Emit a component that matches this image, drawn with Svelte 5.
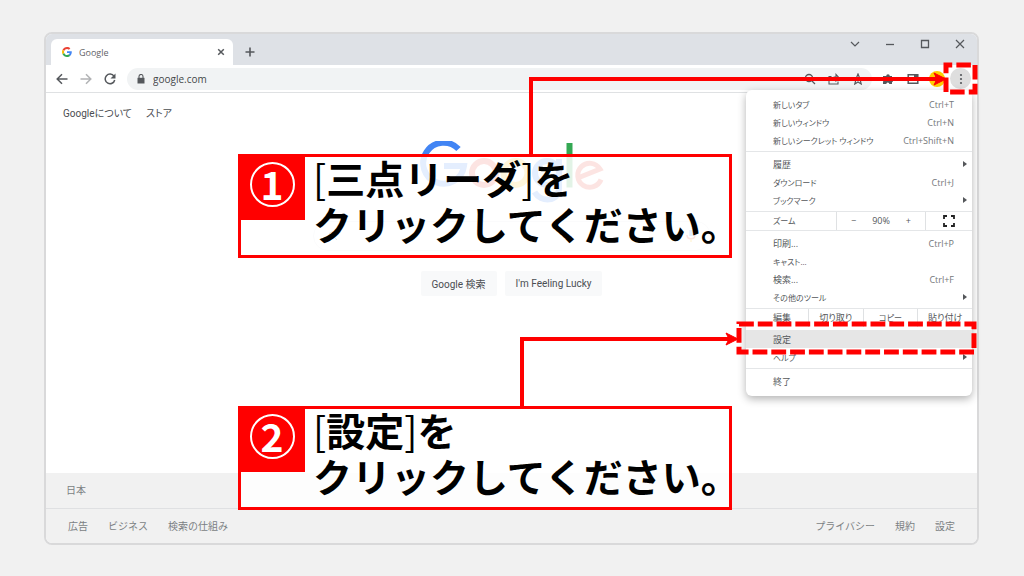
<script lang="ts">
	type MenuItem = { label: string; keys?: string; sub?: boolean; active?: boolean };

	const tabItems: MenuItem[] = [
		{ label: '新しいタブ', keys: 'Ctrl+T' },
		{ label: '新しいウィンドウ', keys: 'Ctrl+N' },
		{ label: '新しいシークレット ウィンドウ', keys: 'Ctrl+Shift+N' },
	];
	const historyItems: MenuItem[] = [
		{ label: '履歴', sub: true },
		{ label: 'ダウンロード', keys: 'Ctrl+J' },
		{ label: 'ブックマーク', sub: true },
	];
	const toolItems: MenuItem[] = [
		{ label: '印刷...', keys: 'Ctrl+P' },
		{ label: 'キャスト...' },
		{ label: '検索...', keys: 'Ctrl+F' },
		{ label: 'その他のツール', sub: true },
	];
	const settingItems: MenuItem[] = [
		{ label: '設定', active: true },
		{ label: 'ヘルプ', sub: true },
	];
	const exitItems: MenuItem[] = [{ label: '終了' }];

	const steps = [
		{ no: 1, target: '三点リーダ' },
		{ no: 2, target: '設定' },
	];

	// kana labels are set one size smaller than kanji ones
	const hasKana = (text: string): boolean => /[ぁ-んァ-ヶ]/.test(text);

	let query = '';
	let address = 'google.com';
</script>

{#snippet group(items: MenuItem[])}
	<div class="group">
		{#each items as item}
			<button class="item" class:active={item.active}>
				<span class="label" class:kana={hasKana(item.label)}>{item.label}</span>
				{#if item.keys}<span class="keys">{item.keys}</span>{/if}
				{#if item.sub}<span class="arrow"></span>{/if}
			</button>
		{/each}
	</div>
{/snippet}

<div class="page">
	<div class="window">
		<header class="titlebar">
			<div class="tab">
				<svg class="favicon" viewBox="0 0 48 48" width="10" height="10">
					<path fill="#ea4335" d="M24 9.5c3.5 0 6.700 1.200 9.200 3.600l6.900-6.900C35.900 2.400 30.500 0 24 0 14.600 0 6.500 5.400 2.600 13.200l8 6.200C12.400 13.700 17.700 9.500 24 9.500z" />
					<path fill="#4285f4" d="M47 24.500c0-1.600-.2-3.100-.4-4.500H24v9h12.900c-.6 3-2.200 5.500-4.800 7.200l7.700 6C44.400 38 47 31.800 47 24.500z" />
					<path fill="#fbbc05" d="M10.500 28.600c-.5-1.500-.8-3-.8-4.600s.3-3.100.8-4.600l-8-6.200C.9 16.500 0 20.100 0 24s.9 7.500 2.600 10.800z" />
					<path fill="#34a853" d="M24 48c6.500 0 11.900-2.100 15.900-5.800l-7.700-6c-2.200 1.500-4.900 2.300-8.200 2.300-6.300 0-11.600-4.200-13.500-9.900l-8 6.200C6.500 42.600 14.600 48 24 48z" />
				</svg>
				<span class="tab-title">Google</span>
				<button class="icon" aria-label="タブを閉じる">
					<svg width="8" height="8" viewBox="0 0 8 8"><path d="M1.200 1.200l5.600 5.600M6.800 1.200L1.200 6.800" stroke-width="1.500" /></svg>
				</button>
			</div>
			<button class="icon new-tab" aria-label="新しいタブ">
				<svg width="10" height="10" viewBox="0 0 10 10"><path d="M5 .5v9M.5 5h9" stroke-width="1.600" /></svg>
			</button>
			<div class="controls">
				<button class="icon" aria-label="タブを検索"><svg width="10" height="10" viewBox="0 0 10 10"><path d="M1 3l4 4 4-4" stroke-width="1.200" /></svg></button>
				<button class="icon" aria-label="最小化"><svg width="10" height="10" viewBox="0 0 10 10"><path d="M1 5.500h8" stroke-width="1.300" /></svg></button>
				<button class="icon" aria-label="最大化"><svg width="10" height="10" viewBox="0 0 10 10"><path d="M1.500 1.500h7v7h-7z" stroke-width="1.300" /></svg></button>
				<button class="icon" aria-label="閉じる"><svg width="10" height="10" viewBox="0 0 10 10"><path d="M1 1l8 8M9 1L1 9" stroke-width="1.200" /></svg></button>
			</div>
		</header>

		<div class="toolbar">
			<nav class="history">
				<button class="icon" aria-label="戻る"><svg width="12" height="12" viewBox="0 0 12 12"><path d="M11.500 6H1.500M6 1.200L1.200 6 6 10.800" stroke-width="1.500" /></svg></button>
				<button class="icon faded" aria-label="進む"><svg width="12" height="12" viewBox="0 0 12 12"><path d="M.5 6h10M6 1.200L10.800 6 6 10.800" stroke-width="1.500" /></svg></button>
				<button class="icon" aria-label="再読み込み"><svg width="12" height="12" viewBox="0 0 12 12"><path d="M10 3.200A4.800 4.800 0 1 0 10.700 7" stroke-width="1.500" /><path class="solid" d="M11.500.5v5h-5z" /></svg></button>
			</nav>
			<div class="omnibox">
				<svg width="8" height="10" viewBox="0 0 8 10"><path class="solid" d="M.5 3.800h7v5.700h-7z" /><path d="M2 4V2.500a2 2 0 0 1 4 0V4" stroke-width="1.100" /></svg>
				<input class="address" aria-label="アドレス" bind:value={address} />
				<svg width="12" height="12" viewBox="0 0 12 12"><circle cx="5" cy="5" r="3.500" stroke-width="1.300" /><path d="M7.500 7.500l3.500 3.500" stroke-width="1.300" /></svg>
				<svg width="12" height="12" viewBox="0 0 12 12"><path d="M3.500 3.500H1v7.500h9V8.500M3.500 8c.3-3 2-4.200 4.500-4.200V1.500L11.300 5 8 8V5.800" stroke-width="1.100" /></svg>
				<svg width="12" height="12" viewBox="0 0 12 12"><path d="M6 1l1.400 3.500 3.800.3-2.900 2.500.9 3.700L6 9l-3.200 2 .9-3.700L.8 4.800l3.800-.3z" stroke-width="1.200" /></svg>
			</div>
			<div class="extensions">
				<button class="icon" aria-label="拡張機能"><svg width="12" height="12" viewBox="0 0 12 12"><path class="solid" d="M1 3h3.200a1.800 1.800 0 0 1 3.600 0H10v3a1.700 1.700 0 0 1 0 3.200V11H7.300a1.500 1.500 0 0 0-3 0H1V8.300a1.500 1.500 0 0 0 0-3z" /></svg></button>
				<button class="icon" aria-label="サイドパネル"><svg width="12" height="12" viewBox="0 0 12 12"><path d="M1.200 1.700h9.600v8.600H1.200z" stroke-width="1.500" /><path class="solid" d="M7 2h4v4.500H7z" /></svg></button>
				<button class="icon avatar" aria-label="プロフィール"><svg width="8" height="10" viewBox="0 0 8 10"><path class="solid" d="M2 0l5 4.500L2.500 10z" /></svg></button>
				<button class="icon more" aria-label="メニュー"><svg width="4" height="12" viewBox="0 0 4 12"><circle class="solid" cx="2" cy="2" r="1.100" /><circle class="solid" cx="2" cy="6" r="1.100" /><circle class="solid" cx="2" cy="10" r="1.100" /></svg></button>
			</div>
		</div>

		<main>
			<nav class="top-links">
				<a href="#about">Googleについて</a>
				<a href="#store">ストア</a>
			</nav>
			<svg class="logo" width="184" height="62" viewBox="0 0 184 62" aria-label="Google">
				<path d="M38.500 8A20.500 20.500 0 1 0 44 25H24" stroke="#4285f4" />
				<circle cx="64" cy="32" r="12" stroke="#ea4335" />
				<circle cx="95.500" cy="32" r="12" stroke="#fbbc05" />
				<path d="M139 18v29c0 14-18 15-24.500 4M139 32a12 12 0 1 0-24 0 12 12 0 0 0 24 0" stroke="#4285f4" />
				<path d="M149.500 2v44.500" stroke="#34a853" />
				<path d="M159 36.500L180 28a12 12 0 1 0 1 10.500" stroke="#ea4335" stroke-width="5" />
			</svg>
			<div class="search">
				<svg width="10" height="10" viewBox="0 0 10 10"><circle cx="4" cy="4" r="3" /><path d="M6.500 6.500L9 9" /></svg>
				<input aria-label="検索" bind:value={query} />
				<svg width="10" height="14" viewBox="0 0 10 14"><path d="M5 1v6" stroke="#4285f4" stroke-width="3.500" /><path d="M1 6c0 5 8 5 8 0" stroke="#ea4335" stroke-width="1.500" /><path d="M5 10v3" stroke="#fbbc05" stroke-width="1.500" /></svg>
			</div>
			<div class="buttons">
				<button>Google 検索</button>
				<button>I'm Feeling Lucky</button>
			</div>
		</main>

		<footer>
			<div class="country">日本</div>
			<div class="foot-links">
				<nav>
					<a href="#ads">広告</a>
					<a href="#business">ビジネス</a>
					<a href="#how">検索の仕組み</a>
				</nav>
				<nav>
					<a href="#privacy">プライバシー</a>
					<a href="#terms">規約</a>
					<a href="#settings">設定</a>
				</nav>
			</div>
		</footer>

		<div class="menu">
			{@render group(tabItems)}
			{@render group(historyItems)}
			<div class="zoom">
				<span class="label kana">ズーム</span>
				<div class="zoom-level">
					<button aria-label="縮小">−</button>
					<span>90%</span>
					<button aria-label="拡大">+</button>
				</div>
				<button class="icon" aria-label="全画面表示">
					<svg width="12" height="12" viewBox="0 0 12 12"><path d="M1 4V1h3M8 1h3v3M11 8v3H8M4 11H1V8" stroke="#222" stroke-width="1.800" /></svg>
				</button>
			</div>
			{@render group(toolItems)}
			<div class="edit">
				<span class="label">編集</span>
				<button>切り取り</button>
				<button class="kana">コピー</button>
				<button>貼り付け</button>
			</div>
			{@render group(settingItems)}
			{@render group(exitItems)}
		</div>
	</div>

	<!-- step callouts and the lines that lead to their targets -->
	{#each steps as step}
		<section class="callout step-{step.no}">
			<div class="badge"><span>{step.no}</span></div>
			<p><span class="bracket">[</span>{step.target}<span class="bracket">]</span>を<br />クリックしてください。</p>
		</section>
	{/each}
	<svg class="lines" width="1024" height="576" viewBox="0 0 1024 576">
		<path d="M531 155V79H940M522 407V339H732" stroke-width="4" />
		<path class="head" d="M934 73l12 6-12 6 3-6zM726 333l12 6-12 6 3-6z" />
		<rect x="946" y="65" width="29" height="27" pathLength="108" stroke-dasharray="14 4" stroke-dashoffset="8" />
		<rect x="739" y="324" width="235" height="28" pathLength="532" stroke-dasharray="15 4" />
	</svg>
</div>

<style>
	:global(body) {
		margin: 0;
		background: #f1f1f1;
	}

	.page {
		position: relative;
		display: flex;
		box-sizing: border-box;
		min-height: 100vh;
		padding: 32px 45px 31px 44px;
		font-family: 'Open Sans', 'Noto Sans CJK JP', sans-serif;
		font-size: 9px;
		color: #5f6368;
	}

	button,
	input {
		padding: 0;
		border: 0;
		background: none;
		font: inherit;
		color: inherit;
		outline: none;
	}

	a {
		color: inherit;
		text-decoration: none;
	}

	svg {
		display: block;
		flex: none;
		fill: none;
		stroke: #55585c;
	}

	.solid {
		fill: #55585c;
		stroke: none;
	}

	.favicon {
		stroke: none;
	}

	.icon {
		display: flex;
		align-items: center;
		justify-content: center;
	}

	.window {
		position: relative;
		flex: 1;
		display: flex;
		flex-direction: column;
		border: 2px solid #d9d9da;
		border-radius: 8px;
		background: #fff;
	}

	.titlebar {
		display: flex;
		align-items: flex-end;
		height: 31px;
		border-radius: 6px 6px 0 0;
		background: #dee1e6;
	}

	.tab {
		display: flex;
		align-items: center;
		gap: 7px;
		box-sizing: border-box;
		width: 182px;
		height: 26px;
		margin-left: 5px;
		padding: 0 8px 0 11px;
		border-radius: 6px 6px 0 0;
		background: #fff;
	}

	.tab-title {
		flex: 1;
	}

	.new-tab {
		width: 33px;
		height: 26px;
	}

	.controls {
		display: flex;
		gap: 25px;
		margin: 0 12px 16px auto;
	}

	.toolbar {
		display: flex;
		align-items: center;
		height: 27px;
		border-bottom: 1px solid #dfe1e3;
	}

	.history {
		display: flex;
		gap: 12px;
		margin: 0 10px;
	}

	.faded {
		opacity: 0.45;
	}

	.omnibox {
		flex: 1;
		display: flex;
		align-items: center;
		gap: 12px;
		height: 22px;
		margin-left: 1px;
		padding: 0 8px 0 10px;
		border-radius: 11px;
		background: #f1f3f4;
	}

	.address {
		flex: 1;
		min-width: 0;
		margin-left: -4px;
		font-size: 10px;
		color: #44474a;
	}

	.extensions {
		display: flex;
		align-items: center;
		gap: 13px;
		margin: 0 6px 0 10px;
	}

	.avatar {
		width: 16px;
		height: 16px;
		margin-left: -3px;
		border-radius: 50%;
		background: #fc0;
	}

	.more {
		width: 21px;
		height: 21px;
		margin-left: -8px;
		border-radius: 50%;
		background: #dedede;
	}

	main {
		flex: 1;
		display: flex;
		flex-direction: column;
		align-items: center;
		font-family: Roboto, 'Noto Sans CJK JP', sans-serif;
		font-size: 10px;
		color: #4a4d51;
	}

	.top-links {
		display: flex;
		gap: 14px;
		align-self: stretch;
		padding: 12px 17px;
		line-height: 18px;
		font-feature-settings: 'palt';
	}

	.logo {
		margin-top: 6px;
		stroke-width: 6;
	}

	.search {
		display: flex;
		align-items: center;
		gap: 14px;
		box-sizing: border-box;
		width: 398px;
		max-width: 90%;
		height: 30px;
		margin-top: 18px;
		padding: 0 14px;
		border: 1px solid #dfe1e5;
		border-radius: 15px;
	}

	.search input {
		flex: 1;
	}

	.buttons {
		display: flex;
		gap: 8px;
		margin-top: 20px;
	}

	.buttons button {
		height: 25px;
		padding: 0 11px;
		border-radius: 2px;
		background: #f8f9fa;
	}

	footer {
		border-radius: 0 0 6px 6px;
		background: #f1f1f1;
		font-size: 10px;
		color: #7b7f83;
	}

	.country {
		padding: 0 20px;
		line-height: 35px;
		border-bottom: 1px solid #dfe0e2;
	}

	.foot-links {
		display: flex;
		justify-content: space-between;
		padding: 0 22px;
		line-height: 34px;
	}

	.foot-links nav {
		display: flex;
		gap: 20px;
	}

	.menu {
		position: absolute;
		top: 56px;
		right: 5px;
		width: 226px;
		padding: 2px 0 4px;
		border-radius: 6px;
		background: #fff;
		box-shadow: 0 3px 8px rgba(0, 0, 0, 0.3);
		color: #54575a;
		font-feature-settings: 'palt';
	}

	.group {
		padding: 3px 0 2px;
	}

	.group + .group {
		border-top: 1px solid #e4e6e8;
	}

	.item {
		display: flex;
		align-items: center;
		box-sizing: border-box;
		width: 100%;
		height: 18px;
		padding: 0 5px 0 27px;
		text-align: left;
	}

	.active {
		background: #e6e6e6;
	}

	.label {
		flex: 1;
	}

	.kana {
		font-size: 8px;
	}

	.keys {
		margin-right: 13px;
		color: #74777a;
	}

	.arrow {
		border: 3px solid transparent;
		border-left: 4px solid #54575a;
		border-right: 0;
	}

	.zoom,
	.edit {
		display: grid;
		align-items: stretch;
		height: 18px;
		line-height: 18px;
		border-top: 1px solid #e4e6e8;
	}

	.zoom {
		grid-template-columns: 90px 89px 1fr;
		border-bottom: 1px solid #e4e6e8;
	}

	.edit {
		grid-template-columns: 62px 1fr 1fr 1fr;
	}

	.zoom .label,
	.edit .label {
		padding-left: 27px;
	}

	.zoom-level {
		display: flex;
		justify-content: center;
		gap: 16px;
	}

	.zoom > :not(.label),
	.edit button {
		border-left: 1px solid #dfe1e3;
	}

	.callout {
		position: absolute;
		left: 238px;
		display: flex;
		box-sizing: border-box;
		width: 494px;
		height: 104px;
		border: 3px solid #f00;
		background: rgba(255, 255, 255, 0.86);
		color: #000;
		font-family: 'Noto Sans CJK JP', sans-serif;
	}

	.step-1 {
		top: 154px;
	}

	.step-2 {
		top: 406px;
	}

	.badge {
		display: flex;
		flex: none;
		align-items: center;
		justify-content: center;
		box-sizing: border-box;
		width: 64px;
		height: 63px;
		padding: 0 2px 8px 0;
		background: #f00;
	}

	.badge span {
		box-sizing: border-box;
		width: 45px;
		height: 45px;
		border: 2px solid #fff;
		border-radius: 50%;
		color: #fff;
		font-size: 39px;
		font-weight: 700;
		line-height: 39px;
		text-align: center;
	}

	.callout p {
		margin: -3px 0 0 8px;
		font-size: 39px;
		font-weight: 700;
		line-height: 46px;
		white-space: nowrap;
	}

	.bracket {
		font-weight: 400;
	}

	.lines {
		position: absolute;
		top: 0;
		left: 0;
		pointer-events: none;
		stroke: #f00;
		stroke-width: 5;
	}

	.head {
		fill: #f00;
		stroke-width: 1;
	}
</style>
